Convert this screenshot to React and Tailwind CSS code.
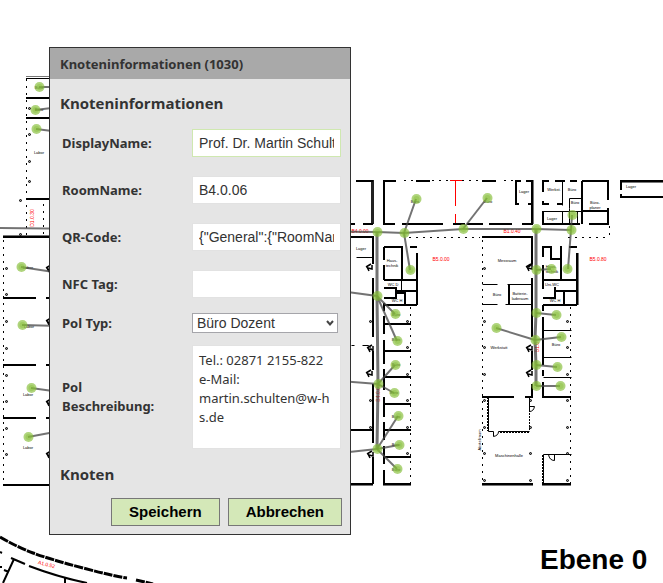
import React from "react";

const NODES = [
  [39, 87], [35, 110], [36, 129], [21, 267], [22, 325], [31, 388], [28, 437],
  [416, 199], [377, 232], [404, 233], [463, 229], [487, 198], [410, 270], [377, 296],
  [395, 314], [397, 341], [395, 365], [394, 393], [398, 416], [399, 445], [397, 469],
  [378, 384], [377, 449], [536, 229], [571, 230], [572, 215], [536, 270], [551, 269],
  [567, 269], [536, 313], [556, 315], [496, 328], [535, 340], [561, 337], [536, 365],
  [557, 367], [536, 386], [560, 386],
];

const PATHS = [
  "M39 87H60", "M35 110L60 107", "M36 129L60 132", "M0 228L377 232", "M21 267L60 273",
  "M22 325L60 326", "M31 388L60 392", "M28 437L60 431", "M377 232L404 233L463 229L536 229L571 230",
  "M404 233L416 199", "M404 233L410 270", "M463 229L487 198", "M340 291L377 296L395 314",
  "M377 296L397 341", "M340 381L378 384L395 365", "M378 384L394 393", "M340 453L377 449L399 445",
  "M377 449L398 416", "M377 449L397 469", "M571 230L572 215",
  "M571 230L568 269", "M536 270L551 269", "M536 313L556 315", "M535 340L496 328", "M535 340L561 337",
  "M536 365L557 367", "M536 386H560",
];

const THICK =
  "M26 98H50M26 118H50M26 199H50M3 237H50M3 298H36M46 298H50M3 365H36M46 365H50M3 418H36M46 418H50M3 485H50" +
  "M356 181H373M383 181H396M416 181H430M384 180V225M383 224H395M363 224H373M351 224H355M402 224H443M453 224H465M467 224H483" +
  "M351 237H373V264M373 278V337M373 351V370M373 384V443M373 457V484" +
  "M384 247H402V280M410 247H417M417 253V305M384 247V260M384 265V280M384 280H417M384 288H396V298H384M396 291H417M396 293H405V305M384 305H417" +
  "M383 324H411M383 351H411M383 377H411M383 404H411M383 430H411M383 457H411M383 484H411M351 430H373M351 484H373" +
  "M384 303V311M384 316V334M384 340V364M384 369V390M384 397V417M384 422V440M384 446V464M384 470V484" +
  "M482 181H496M515 181H521M526 181H532V224H522M489 224H512M516 181V204H519M528 204H532" +
  "M543 192V181H549M555 181H565M570 181H577M582 181V224M582 181H608V200M543 201V204H549M557 204H563M543 211V224H580M589 224H608V208M582 211H608" +
  "M663 181H621V190M621 194V197H663M482 237H532V264L528 267M532 278V337M532 351V370M532 384V397H525" +
  "M509 284V304" +
  "M543 257V247H551V259H561M561 246V280M569 247H577M577 253V305M543 265V289M543 280H577M543 298H555V287M555 291H577M564 291V305M543 305H577" +
  "M543 305V311M543 317V365M543 370V376M543 382V397H571M482 397H514M482 484H533M542 484H571";

const THIN =
  "M356 257H373M482 284H497M507 284H532M482 304H497M505 304H532M543 330H571M543 357H571M543 377H571M543 454H571" +
  "M562 181V205M562 211V224M543 211H582M569 208V198H581M569 208V224M577 211V224M401 280V291" +
  "M351 345H354M362 345H368L373 351M488 397V431H493V436Q498 435 498 431H529M529 397V411M529 406H534Q533 411 529 411M543 454V484M548 454Q549 460 554 460V454";

const DOORS = [
  [368, 267], [369, 348], [368, 373], [369, 454], [528, 267], [528, 348], [528, 373],
  [48, 268], [48, 321], [48, 402], [48, 454],
];

const COLUMNS = [
  [29, 108], [29, 134], [29, 161], [29, 181], [20, 200], [20, 234],
  [6, 268], [6, 294], [6, 321], [6, 348], [6, 375], [6, 401], [6, 428], [6, 454],
  [370, 321], [370, 400], [370, 427],
  [407, 321], [407, 347], [407, 374], [407, 400], [407, 427], [407, 453],
  [484, 268], [484, 321], [484, 347], [484, 374], [484, 400], [484, 427], [484, 453], [484, 480],
  [567, 321], [567, 347], [567, 374], [567, 400], [567, 427], [567, 453], [567, 480],
  [530, 400], [530, 427], [530, 453], [530, 480],
];

const ROOMS = [
  [39, 154, "Labor"], [39, 89, "Büro"], [39, 111, "Büro"], [28, 269, "Labor"], [29, 328, "Labor"], [28, 396, "Labor"], [28, 449, "Labor"],
  [361, 250, "Lager"], [392, 262, "Haus-"], [392, 267, "technik"], [393, 286, "WC D"], [397, 302, "WC H"],
  [524, 193, "Lager"], [554, 191, "Werkst."], [572, 191, "Büro"], [575, 204, "Büro"], [595, 204, "Büro-"], [595, 209, "planer"],
  [552, 220, "Lager"], [631, 188, "Lager"], [507, 262, "Messraum"], [497, 296, "Büro"], [520, 295, "Batterie-"], [520, 300, "laderaum"],
  [552, 286, "Uni-WC"], [555, 302, "WC H"], [499, 349, "Werkstatt"], [556, 346, "Büro"], [488, 203, "Büro"], [415, 203, "Büro"],
  [396, 316, "Büro"], [396, 341, "Büro"], [396, 366, "Büro"], [394, 394, "Büro"], [396, 418, "Büro"], [396, 446, "Büro"], [396, 471, "Büro"],
  [551, 268, "Haus-"], [552, 273, "technik"],
];

function FloorPlan() {
  return (
    <svg className="absolute left-0 top-0" width="663" height="583" viewBox="0 0 663 583" role="img" aria-label="Gebäudeplan Ebene 0">
      <g fill="none" stroke="#000">
        <g strokeWidth="1" stroke="#777">
          <path d="M26 76.500H50M3 235.500H50M351 485.500H373M383 485.500H411M482 485.500H533M542 485.500H571M533.500 180V224M578.500 253V305M621 182.500H663" />
        </g>
        <path d="M26 78.500H50" />
        <path d="M372.500 180V224" strokeWidth="3" stroke="#222" />
        <path d={THICK} strokeWidth="2" />
        <path d={THIN} strokeWidth="1" transform="translate(.5 .5)" />
        <path
          strokeDasharray="2 5"
          d="M26.500 79V237M43.500 204V237M3.500 240V484M404 180.500H450M462 180.500H480M504 180.500H514M410.500 307V484M409 237.500H480M482.500 240V484M570.500 307V484M568 237.500H609M609.500 226V237"
        />
        <path d="M487.500 397V431M529.500 398V431M542.500 455V484M500 432.500H529" strokeDasharray="2 1" />
        <path d="M0 537Q17 547 33 553T83 568T127 578M136 580L153 584" strokeWidth="3" strokeDasharray="9 1" />
        <path d="M11 558L25 564M29 566Q58 577 87 583M14 559L3 583M65 578V583M0 552L2 553M0 567H2M4 570L9 572" strokeWidth="2" />
      </g>
      <path d="M450 180.500H462M455.500 181V206M455.500 214V223" stroke="#f00" />
      {DOORS.map(([x, y]) => (
        <path key={`${x}-${y}`} d={`M${x - 2} ${y}L${x + 3} ${y - 3}M${x - 1} ${y}L${x + 1} ${y + 4}M${x} ${y + 1}L${x + 4} ${y + 2}V${y - 2}`} stroke="#000" strokeWidth="1.500" fill="none" />
      ))}
      {COLUMNS.map(([x, y]) => (
        <circle key={`${x}-${y}`} cx={x + 0.5} cy={y + 0.5} r="1" fill="#999" stroke="#000" />
      ))}
      <g fontFamily="Liberation Sans, sans-serif" fontSize="4" textAnchor="middle" fill="#000">
        {ROOMS.map(([x, y, name]) => (
          <text key={`${x}-${y}`} x={x} y={y}>{name}</text>
        ))}
        <text x="509" y="457">Maschinenhalle</text>
        <text transform="translate(481 440) rotate(-90)">Abstellraum</text>
      </g>
      <g fontFamily="Liberation Sans, sans-serif" fontSize="5" textAnchor="middle" fill="#f00">
        <text transform="translate(34 218) rotate(-90)">D1.0.30</text>
        <text x="360" y="233">B4.0.00</text>
        <text x="441" y="261">B5.0.00</text>
        <text x="512" y="233">B1.0.40</text>
        <text x="598" y="261">B5.0.80</text>
        <text transform="translate(380 393) rotate(-90)">B4.0.01</text>
        <text transform="translate(539 347) rotate(-90)">B1.0</text>
        <text transform="translate(46 566) rotate(15)">A1.0.52</text>
      </g>
      <g fill="none" stroke="#444" strokeOpacity=".75" strokeWidth="2">
        {PATHS.map((d) => <path key={d} d={d} />)}
        <path d="M377 232V296L378 384L377 449M536 229V313L535 340L536 365V386" strokeWidth="3" />
      </g>
      {NODES.map(([x, y]) => (
        <g key={`${x}-${y}`} fill="#84bd35">
          <circle cx={x + 0.5} cy={y} r="5" fillOpacity=".65" />
          <circle cx={x + 0.5} cy={y} r="3" fillOpacity=".4" />
        </g>
      ))}
    </svg>
  );
}

function Row({ id, label, className, children }) {
  return (
    <div className={`flex items-center ${className}`}>
      <label htmlFor={id} className="w-[130px] shrink-0 pr-6 text-[13px] leading-[19px] font-bold">{label}</label>
      {children}
    </div>
  );
}

function TextField({ id, label, value, active }) {
  return (
    <Row id={id} label={label} className="mb-[19px]">
      <input
        id={id}
        type="text"
        defaultValue={value}
        className={`h-7 w-0 grow border bg-white px-1.5 font-['Liberation_Sans',sans-serif] text-sm outline-none ${active ? "border-[#cfe8b0]" : "border-[#e2e2e2]"}`}
      />
    </Row>
  );
}

function DialogButton({ type, children }) {
  return (
    <button type={type} className="h-7 border border-[#777] bg-[#d4e8b8] px-[17px] font-['Liberation_Sans',sans-serif] text-[15px] leading-5 font-bold text-black">
      {children}
    </button>
  );
}

export default function App() {
  return (
    <main className="relative min-h-screen overflow-hidden bg-white font-['Noto_Sans','Open_Sans',sans-serif] text-[#333]">
      <FloorPlan />
      <section aria-labelledby="dialog-title" className="absolute top-[47px] left-[49px] w-[302px] border border-[#333] bg-[#e5e5e5]">
        <header className="flex h-[31px] items-center bg-[#a9a9a9] px-2.5">
          <h1 id="dialog-title" className="text-[13px] leading-5 font-bold">Knoteninformationen (1030)</h1>
        </header>
        <form className="pt-3 pr-[9px] pb-2 pl-2.5" onSubmit={(e) => e.preventDefault()}>
          <h2 className="mb-3.5 font-['Open_Sans',sans-serif] text-[15px] leading-6 font-bold">Knoteninformationen</h2>
          <div className="pl-0.5">
            <TextField id="display" label="DisplayName:" value="Prof. Dr. Martin Schulten" active />
            <TextField id="room" label="RoomName:" value="B4.0.06" />
            <TextField id="qr" label="QR-Code:" value={'{"General":{"RoomName":"B4.0.06"}}'} />
            <TextField id="nfc" label="NFC Tag:" value="" />
            <Row id="type" label="Pol Typ:" className="-mt-1 mb-3">
              <div className="relative mr-[3px] grow">
                <select id="type" className="block h-5 w-full appearance-none border border-[#a5a5aa] bg-white pl-1 font-['Liberation_Sans',sans-serif] text-sm leading-[18px]">
                  <option>Büro Dozent</option>
                </select>
                <svg className="pointer-events-none absolute top-1.5 right-1" width="8" height="8" viewBox="0 0 8 8" fill="none" stroke="#444" strokeWidth="2">
                  <path d="M1 2L4 5.500L7 2" />
                </svg>
              </div>
            </Row>
            <Row id="description" label="Pol Beschreibung:" className="mb-[13px]">
              <textarea
                id="description"
                className="block h-[104px] w-0 grow resize-none overflow-hidden border border-[#e2e2e2] bg-white px-1.5 py-[5px] text-[13px] leading-[19px] break-all outline-none"
                defaultValue={"Tel.: 02871 2155-822\ne-Mail:\nmartin.schulten@w-hs.de"}
              />
            </Row>
          </div>
          <h2 className="mb-3 font-['Open_Sans',sans-serif] text-[15px] leading-6 font-bold">Knoten</h2>
          <div className="-mr-px flex justify-end gap-2">
            <DialogButton type="submit">Speichern</DialogButton>
            <DialogButton type="button">Abbrechen</DialogButton>
          </div>
        </form>
      </section>
      <p className="absolute top-[542px] left-[540px] font-['Liberation_Sans',sans-serif] text-[28px] leading-9 font-bold whitespace-nowrap text-black">Ebene 0</p>
    </main>
  );
}
